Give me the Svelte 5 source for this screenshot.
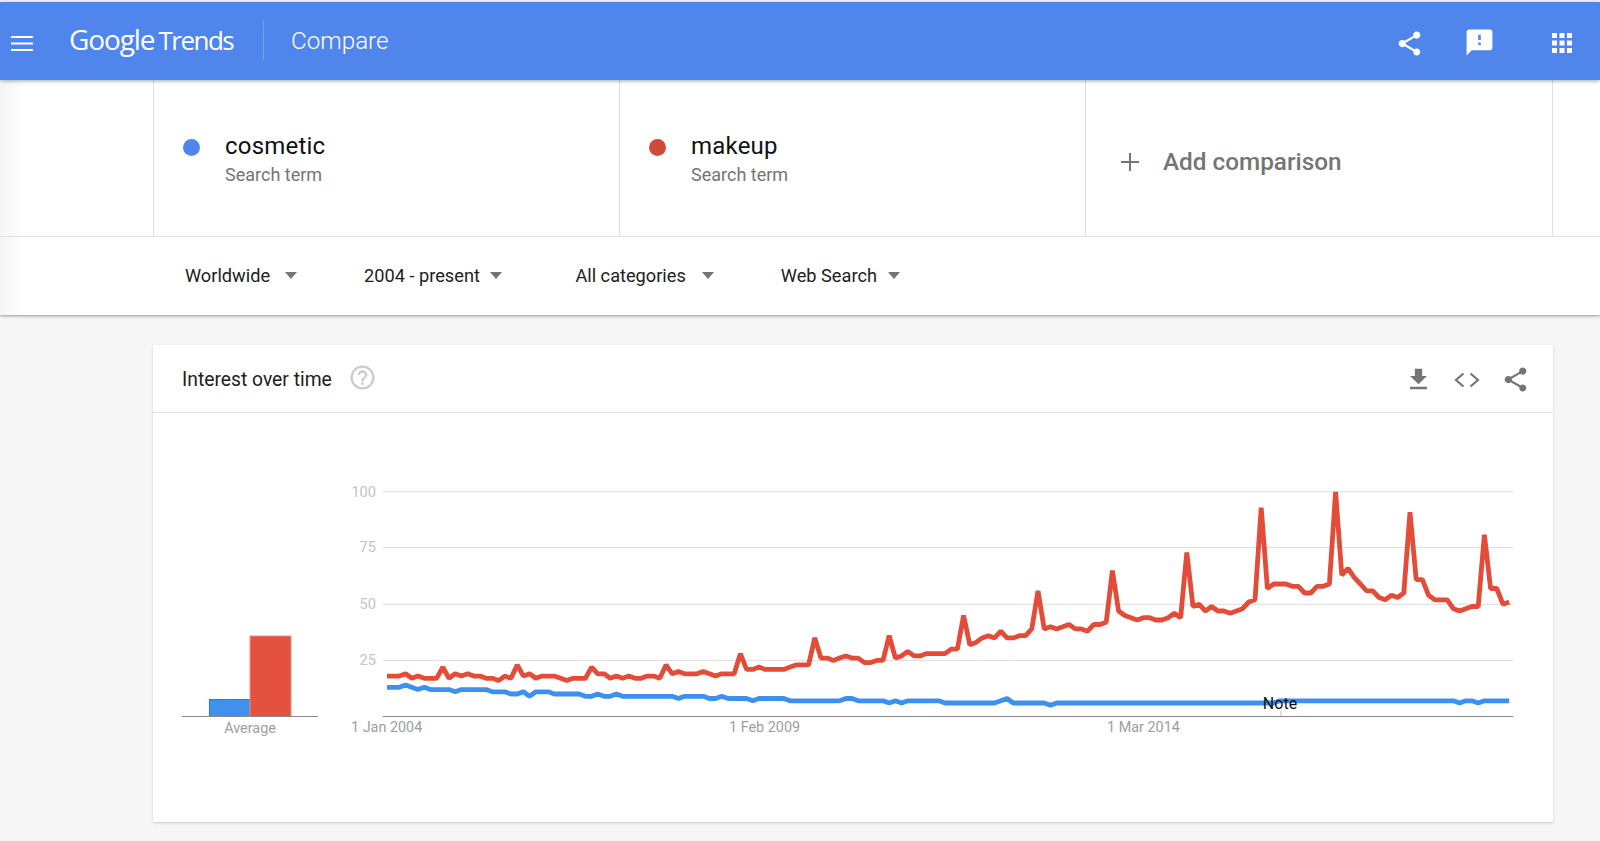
<script>
	const red = [
		18,18,18,19,17,18,17,17,17,22,17,19,18,19,18,18,17,17,16,18,17,23,18,19,
		17,18,18,18,17,16,17,17,17,22,19,19,17,18,17,18,17,17,18,18,17,23,19,
		20,19,19,19,20,19,18,19,19,19,28,21,21,22,21,21,21,21,22,23,23,23,35,26,
		26,25,26,27,26,26,24,24,25,25,36,26,27,29,27,27,28,28,28,28,30,30,45,32,
		33,35,36,35,38,35,35,36,36,39,56,39,40,39,40,41,39,39,38,41,41,42,65,47,
		45,44,43,44,44,43,43,44,46,44,73,49,50,47,49,47,47,46,47,48,51,52,93,57,
		59,59,59,58,58,55,55,58,58,59,100,63,66,62,59,56,56,53,52,54,53,55,91,61,
		61,54,52,52,52,48,47,48,49,49,81,57,57,50,51
	];
	const blue = [
		13,13,13,14,13,12,13,12,12,12,12,11,12,12,12,12,12,11,11,11,10,10,11,9,
		11,11,11,10,10,10,10,10,9,9,10,9,9,10,9,9,9,9,9,9,9,9,9,8,9,9,9,9,8,8,
		9,8,8,8,8,7,8,8,8,8,8,7,7,7,7,7,7,7,7,7,8,8,7,7,7,7,7,6,7,6,7,7,7,7,7,7,
		6,6,6,6,6,6,6,6,6,7,8,6,6,6,6,6,6,5,6,6,6,6,6,6,6,6,6,6,6,6,6,6,6,6,6,6,
		6,6,6,6,6,6,6,6,6,6,6,6,6,6,6,6,6,6,7,7,7,7,7,7,7,7,7,7,7,7,7,7,7,7,7,7,
		7,7,7,7,7,7,7,7,7,7,7,6,7,7,6,7,7,7,7,7
	];
	const grid = [
		{ label: '100', y: 491.7 },
		{ label: '75', y: 547.4 },
		{ label: '50', y: 604.3 },
		{ label: '25', y: 660.4 }
	];
	const dates = [
		{ label: '1 Jan 2004', x: 351 },
		{ label: '1 Feb 2009', x: 729 },
		{ label: '1 Mar 2014', x: 1107 }
	];
	const filters = ['Worldwide', '2004 - present', 'All categories', 'Web Search'];
	const terms = [
		{ name: 'cosmetic', color: '#4f86ec' },
		{ name: 'makeup', color: '#d0493a' }
	];

	const sharePath = 'M18 16.08c-.76 0-1.44.3-1.96.77L8.91 12.7c.05-.23.09-.46.09-.7s-.04-.47-.09-.7l7.05-4.11c.54.5 1.25.81 2.04.81 1.66 0 3-1.34 3-3s-1.34-3-3-3-3 1.34-3 3c0 .24.04.47.09.7L8.04 9.81C7.5 9.31 6.79 9 6 9c-1.66 0-3 1.34-3 3s1.34 3 3 3c.79 0 1.5-.31 2.04-.81l7.12 4.16c-.05.21-.08.43-.08.65 0 1.61 1.31 2.92 2.92 2.92 1.61 0 2.92-1.31 2.92-2.92s-1.31-2.92-2.92-2.92z';

	function toPoints(values) {
		return values.map((v, i) => `${(387 + i * 6.2).toFixed(1)},${(716.5 - v * 2.245).toFixed(1)}`).join(' ');
	}
</script>

<div class="page">
	<header class="topbar">
		<svg class="menu" width="22" height="15" viewBox="0 0 22 15" fill="#fff">
			<rect y="0" width="22" height="2" />
			<rect y="6.5" width="22" height="2" />
			<rect y="13" width="22" height="2" />
		</svg>
		<div class="logo"><span class="google">Google</span><span class="trends">Trends</span></div>
		<div class="bar-sep"></div>
		<div class="page-title">Compare</div>
		<div class="top-actions">
			<svg class="ic-share" width="29" height="29" viewBox="0 0 24 24" fill="#fff"><path d={sharePath} /></svg>
			<svg class="ic-feedback" width="31" height="31" viewBox="0 0 24 24" fill="#fff"><path d="M20 2H4c-1.1 0-1.99.9-1.99 2L2 22l4-4h14c1.1 0 2-.9 2-2V4c0-1.1-.9-2-2-2zm-7 12h-2v-2h2v2zm0-4h-2V6h2v4z" /></svg>
			<svg class="ic-apps" width="30" height="30" viewBox="0 0 24 24" fill="#fff"><path d="M4 8h4V4H4v4zm6 12h4v-4h-4v4zm-6 0h4v-4H4v4zm0-6h4v-4H4v4zm6 0h4v-4h-4v4zm6-10v4h4V4h-4zm-6 4h4V4h-4v4zm6 6h4v-4h-4v4zm0 6h4v-4h-4v4z" /></svg>
		</div>
	</header>

	<section class="panel">
		<div class="terms">
			{#each terms as term}
				<div class="term">
					<span class="dot" style="background:{term.color}"></span>
					<div class="term-text">
						<div class="term-name">{term.name}</div>
						<div class="term-sub">Search term</div>
					</div>
				</div>
			{/each}
			<div class="term add">
				<svg width="18" height="18" viewBox="0 0 18 18" fill="#757575"><rect x="8" width="2" height="18" /><rect y="8" width="18" height="2" /></svg>
				<span>Add comparison</span>
			</div>
		</div>
		<div class="filters">
			{#each filters as filter}
				<div class="filter">
					<span>{filter}</span>
					<i class="caret"></i>
				</div>
			{/each}
		</div>
	</section>

	<main class="content">
		<article class="card">
			<div class="card-head">
				<h2>Interest over time</h2>
				<svg class="help" width="29" height="29" viewBox="0 0 24 24" fill="#ccc"><path d="M11 18h2v-2h-2v2zm1-16C6.48 2 2 6.48 2 12s4.48 10 10 10 10-4.48 10-10S17.52 2 12 2zm0 18c-4.41 0-8-3.59-8-8s3.59-8 8-8 8 3.59 8 8-3.59 8-8 8zm0-14c-2.21 0-4 1.79-4 4h2c0-1.1.9-2 2-2s2 .9 2 2c0 2-3 1.75-3 5h2c0-2.25 3-2.5 3-5 0-2.21-1.79-4-4-4z" /></svg>
				<div class="card-actions">
					<svg width="29" height="29" viewBox="0 0 24 24" fill="#757575"><path d="M19 9h-4V3H9v6H5l7 7 7-7zM5 18v2h14v-2H5z" /></svg>
					<svg width="26" height="18" viewBox="0 0 26 18" fill="none" stroke="#757575" stroke-width="2.2"><path d="M9.500 2.500L2 9l7.500 6.500M16.500 2.500L24 9l-7.500 6.500" /></svg>
					<svg width="29" height="29" viewBox="0 0 24 24" fill="#757575"><path d={sharePath} /></svg>
				</div>
			</div>

			<svg class="chart" width="1400" height="409" viewBox="153 413 1400 409">
				<rect x="209.500" y="699.500" width="40.500" height="17" fill="#4191ec" stroke="#1f7ee3" stroke-width="1" />
				<rect x="250" y="636" width="41" height="80.500" fill="#e4523f" stroke="#f08f82" stroke-width="1" />
				<line x1="182" x2="318" y1="716.500" y2="716.500" stroke="#8a8a8a" />
				<text class="avg" x="250" y="733" text-anchor="middle">Average</text>

				{#each grid as g}
					<line x1="383" x2="1513" y1={g.y} y2={g.y} stroke="#dcdcdc" />
					<text class="tick" x="376" y={g.y + 5} text-anchor="end">{g.label}</text>
				{/each}
				<line x1="383" x2="1513" y1="716.500" y2="716.500" stroke="#8a8a8a" />
				<line x1="1281" x2="1281" y1="711" y2="716" stroke="#bbb" />
				{#each dates as d}
					<text class="date" x={d.x} y="732">{d.label}</text>
				{/each}

				<polyline points={toPoints(blue)} fill="none" stroke="#3d90ee" stroke-width="4.800" stroke-linejoin="bevel" />
				<polyline points={toPoints(red)} fill="none" stroke="#e24c39" stroke-width="4.800" stroke-linejoin="bevel" />
				<text class="note" x="1280" y="709" text-anchor="middle">Note</text>
			</svg>
		</article>
	</main>
</div>

<style>
	:global(body) {
		margin: 0;
		background: #f6f6f6;
	}
	.page {
		height: 841px;
		overflow: hidden;
		display: flex;
		flex-direction: column;
		font-family: Roboto, "Liberation Sans", sans-serif;
	}
	.topbar {
		position: relative;
		z-index: 2;
		height: 78px;
		margin-top: 2px;
		flex: none;
		display: flex;
		align-items: center;
		background: #5085ec;
		color: #fff;
		box-shadow: 0 1px 4px rgba(0, 0, 0, 0.35);
	}
	.menu {
		margin-left: 11px;
		margin-top: 5px;
	}
	.logo {
		margin-left: 36px;
		width: 194px;
		white-space: nowrap;
		font-family: "Open Sans", Roboto, sans-serif;
		margin-top: -4px;
	}
	.google {
		font-size: 28px;
		letter-spacing: -1.1px;
	}
	.trends {
		margin-left: 4px;
		font-size: 26px;
		letter-spacing: -1.5px;
	}
	.bar-sep {
		width: 1px;
		height: 40px;
		background: #76a0f0;
	}
	.page-title {
		margin-left: 27px;
		font-size: 24.200px;
		font-weight: 300;
	}
	.top-actions {
		margin-left: auto;
		display: flex;
		align-items: center;
		margin-right: 23px;
		margin-top: 4px;
	}
	.ic-share {
		margin-right: 40px;
	}
	.ic-feedback {
		margin-right: 52px;
		margin-top: -2px;
	}
	.panel {
		flex: none;
		background: linear-gradient(90deg, #f4f4f4, #fff 24px);
		box-shadow: 0 1px 3px rgba(0, 0, 0, 0.4);
		position: relative;
		z-index: 1;
	}
	.terms {
		height: 156px;
		margin-left: 153px;
		width: 1400px;
		display: grid;
		grid-template-columns: 466px 466px 1fr;
		border-left: 1px solid #e0e0e0;
		box-sizing: border-box;
	}
	.term {
		border-right: 1px solid #e0e0e0;
		display: flex;
		align-items: center;
		padding-left: 29px;
	}
	.dot {
		width: 17px;
		height: 17px;
		border-radius: 50%;
		margin-right: 25px;
		margin-top: -22px;
	}
	.term-text {
		margin-top: 5px;
	}
	.term-name {
		font-size: 24px;
		color: #111;
		line-height: 28px;
		letter-spacing: 0.2px;
	}
	.term-sub {
		font-size: 18px;
		color: #757575;
		line-height: 29px;
	}
	.add {
		padding-left: 35px;
		padding-top: 7px;
		gap: 24px;
		color: #757575;
		font-size: 24.300px;
		font-weight: 500;
	}
	.filters {
		height: 79px;
		border-top: 1px solid #e0e0e0;
		padding-left: 185px;
		padding-bottom: 2px;
		box-sizing: border-box;
		display: flex;
		align-items: center;
		font-size: 18.200px;
		color: #212121;
	}
	.filter {
		display: flex;
		align-items: center;
		gap: 15px;
		margin-right: 67px;
	}
	.filter:nth-child(2) {
		gap: 10px;
		margin-right: 73.500px;
	}
	.filter:nth-child(3) {
		gap: 16px;
	}
	.filter:nth-child(4) {
		gap: 11px;
	}
	.caret {
		width: 0;
		height: 0;
		border: 6.500px solid transparent;
		border-top: 7px solid #757575;
		border-bottom: 0;
	}
	.content {
		flex: 1;
		padding: 30px 47px 0 153px;
	}
	.card {
		width: 1400px;
		height: 477px;
		background: #fff;
		border-radius: 2px;
		box-shadow: 0 1px 3px rgba(0, 0, 0, 0.18);
	}
	.card-head {
		height: 68px;
		border-bottom: 1px solid #e0e0e0;
		box-sizing: border-box;
		display: flex;
		align-items: center;
		padding: 0 23px 0 29px;
	}
	h2 {
		margin: 1px 0 0;
		font-size: 19.300px;
		font-weight: 400;
		color: #212121;
	}
	.help {
		margin-left: 16px;
		margin-top: -2px;
	}
	.card-actions {
		margin-left: auto;
		display: flex;
		align-items: center;
		gap: 21px;
		margin-top: 2px;
	}
	.chart {
		display: block;
	}
	.tick {
		font-size: 14.600px;
		fill: #c4c4c4;
	}
	.date,
	.avg {
		font-size: 14.400px;
		fill: #9e9e9e;
	}
	.note {
		font-size: 16px;
		fill: #111;
	}
</style>
